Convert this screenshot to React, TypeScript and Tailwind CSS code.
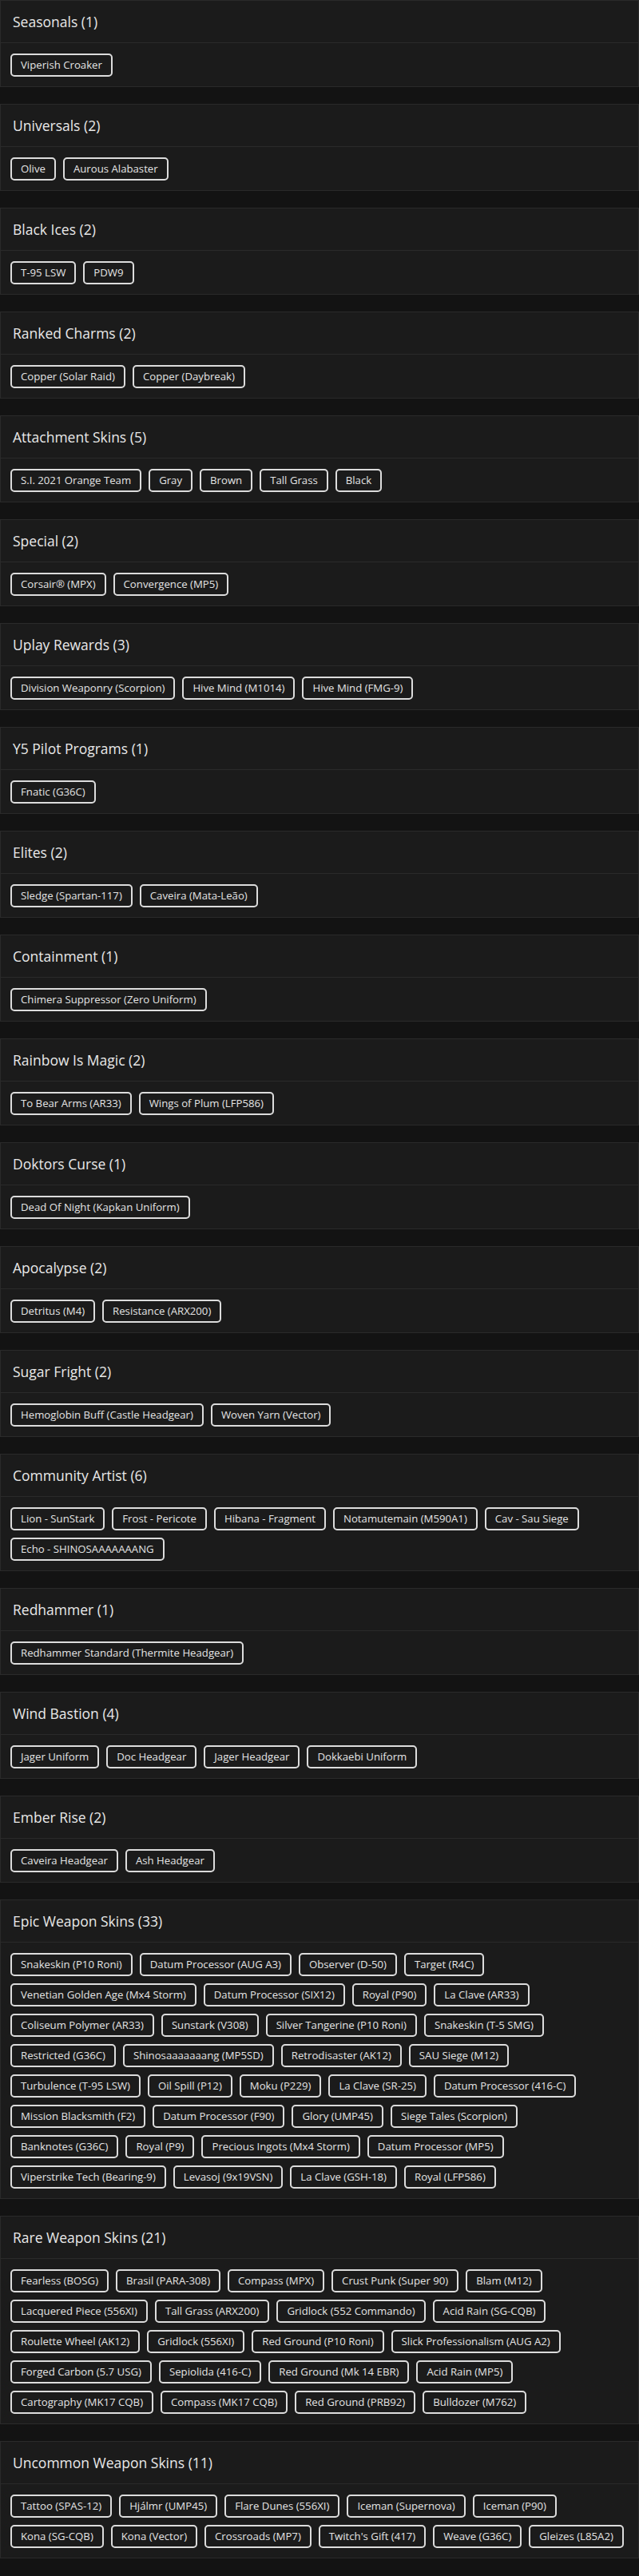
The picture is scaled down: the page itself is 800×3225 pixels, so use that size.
import React from 'react';

type Section = { title: string; rows: string[][] };

const sections: Section[] = [
    { title: 'Seasonals', rows: [['Viperish Croaker']] },
    { title: 'Universals', rows: [['Olive', 'Aurous Alabaster']] },
    { title: 'Black Ices', rows: [['T-95 LSW', 'PDW9']] },
    { title: 'Ranked Charms', rows: [['Copper (Solar Raid)', 'Copper (Daybreak)']] },
    { title: 'Attachment Skins', rows: [['S.I. 2021 Orange Team', 'Gray', 'Brown', 'Tall Grass', 'Black']] },
    { title: 'Special', rows: [['Corsair® (MPX)', 'Convergence (MP5)']] },
    { title: 'Uplay Rewards', rows: [['Division Weaponry (Scorpion)', 'Hive Mind (M1014)', 'Hive Mind (FMG-9)']] },
    { title: 'Y5 Pilot Programs', rows: [['Fnatic (G36C)']] },
    { title: 'Elites', rows: [['Sledge (Spartan-117)', 'Caveira (Mata-Leão)']] },
    { title: 'Containment', rows: [['Chimera Suppressor (Zero Uniform)']] },
    { title: 'Rainbow Is Magic', rows: [['To Bear Arms (AR33)', 'Wings of Plum (LFP586)']] },
    { title: 'Doktors Curse', rows: [['Dead Of Night (Kapkan Uniform)']] },
    { title: 'Apocalypse', rows: [['Detritus (M4)', 'Resistance (ARX200)']] },
    { title: 'Sugar Fright', rows: [['Hemoglobin Buff (Castle Headgear)', 'Woven Yarn (Vector)']] },
    {
        title: 'Community Artist',
        rows: [
            ['Lion - SunStark', 'Frost - Pericote', 'Hibana - Fragment', 'Notamutemain (M590A1)', 'Cav - Sau Siege'],
            ['Echo - SHINOSAAAAAAANG'],
        ],
    },
    { title: 'Redhammer', rows: [['Redhammer Standard (Thermite Headgear)']] },
    { title: 'Wind Bastion', rows: [['Jager Uniform', 'Doc Headgear', 'Jager Headgear', 'Dokkaebi Uniform']] },
    { title: 'Ember Rise', rows: [['Caveira Headgear', 'Ash Headgear']] },
    {
        title: 'Epic Weapon Skins',
        rows: [
            ['Snakeskin (P10 Roni)', 'Datum Processor (AUG A3)', 'Observer (D-50)', 'Target (R4C)'],
            ['Venetian Golden Age (Mx4 Storm)', 'Datum Processor (SIX12)', 'Royal (P90)', 'La Clave (AR33)'],
            ['Coliseum Polymer (AR33)', 'Sunstark (V308)', 'Silver Tangerine (P10 Roni)', 'Snakeskin (T-5 SMG)'],
            ['Restricted (G36C)', 'Shinosaaaaaaang (MP5SD)', 'Retrodisaster (AK12)', 'SAU Siege (M12)'],
            ['Turbulence (T-95 LSW)', 'Oil Spill (P12)', 'Moku (P229)', 'La Clave (SR-25)', 'Datum Processor (416-C)'],
            ['Mission Blacksmith (F2)', 'Datum Processor (F90)', 'Glory (UMP45)', 'Siege Tales (Scorpion)'],
            ['Banknotes (G36C)', 'Royal (P9)', 'Precious Ingots (Mx4 Storm)', 'Datum Processor (MP5)'],
            ['Viperstrike Tech (Bearing-9)', 'Levasoj (9x19VSN)', 'La Clave (GSH-18)', 'Royal (LFP586)'],
        ],
    },
    {
        title: 'Rare Weapon Skins',
        rows: [
            ['Fearless (BOSG)', 'Brasil (PARA-308)', 'Compass (MPX)', 'Crust Punk (Super 90)', 'Blam (M12)'],
            ['Lacquered Piece (556XI)', 'Tall Grass (ARX200)', 'Gridlock (552 Commando)', 'Acid Rain (SG-CQB)'],
            ['Roulette Wheel (AK12)', 'Gridlock (556XI)', 'Red Ground (P10 Roni)', 'Slick Professionalism (AUG A2)'],
            ['Forged Carbon (5.7 USG)', 'Sepiolida (416-C)', 'Red Ground (Mk 14 EBR)', 'Acid Rain (MP5)'],
            ['Cartography (MK17 CQB)', 'Compass (MK17 CQB)', 'Red Ground (PRB92)', 'Bulldozer (M762)'],
        ],
    },
    {
        title: 'Uncommon Weapon Skins',
        rows: [
            ['Tattoo (SPAS-12)', 'Hjálmr (UMP45)', 'Flare Dunes (556XI)', 'Iceman (Supernova)', 'Iceman (P90)'],
            ['Kona (SG-CQB)', 'Kona (Vector)', 'Crossroads (MP7)', "Twitch's Gift (417)", 'Weave (G36C)', 'Gleizes (L85A2)'],
        ],
    },
];

function Chip({ label }: { label: string }) {
    return (
        <span className="whitespace-nowrap rounded-[5px] border-2 border-[#dcdcdc] px-[11px] py-[4px] text-[13.2px] leading-[17px] text-[#e4e4e4]">
            {label}
        </span>
    );
}

function SectionCard({ section }: { section: Section }) {
    const count = section.rows.reduce((n, row) => n + row.length, 0);
    return (
        <section className="border border-[#2a2a2a] bg-[#1b1b1b]">
            <div className="flex h-[53px] items-center border-b border-[#2a2a2a] px-[15px] text-[17.5px] text-[#e8e8e8]">
                {section.title} ({count})
            </div>
            <div className="flex flex-col gap-[9px] px-3 pt-[13px] pb-[12px]">
                {section.rows.map((row, i) => (
                    <div key={i} className="flex gap-[9px]">
                        {row.map((label) => (
                            <Chip key={label} label={label} />
                        ))}
                    </div>
                ))}
            </div>
        </section>
    );
}

export default function App() {
    return (
        <div className="flex min-h-screen flex-col gap-[21px] bg-[#131313] font-['Open_Sans',sans-serif]">
            {sections.map((s) => (
                <SectionCard key={s.title} section={s} />
            ))}
        </div>
    );
}
